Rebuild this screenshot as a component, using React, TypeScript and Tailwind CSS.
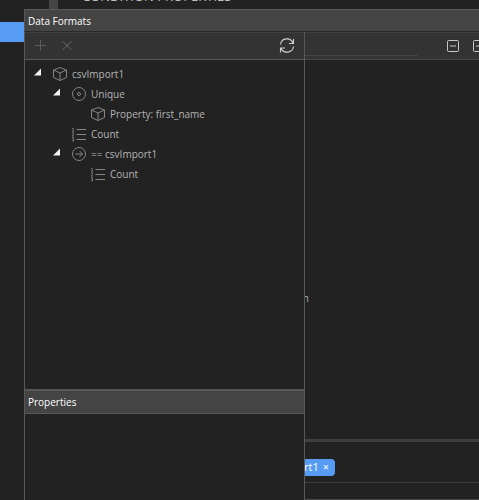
import type { ReactNode } from 'react';

type IconName = 'cube' | 'target' | 'list' | 'arrow';

interface TreeNode {
  label: string;
  icon: IconName;
  children?: TreeNode[];
}

const tree: TreeNode[] = [
  {
    label: 'csvImport1',
    icon: 'cube',
    children: [
      {
        label: 'Unique',
        icon: 'target',
        children: [{ label: 'Property: first_name', icon: 'cube' }],
      },
      { label: 'Count', icon: 'list' },
      {
        label: '== csvImport1',
        icon: 'arrow',
        children: [{ label: 'Count', icon: 'list' }],
      },
    ],
  },
];

const nodeIcons: Record<IconName, ReactNode> = {
  cube: <path d="M8 1.5 14.5 4v7.5L8 14.5 1.5 11.5V4ZM1.5 4 8 7l6.5-3M8 7v7.5" />,
  target: (
    <>
      <circle cx="8" cy="8" r="6.5" />
      <circle cx="8" cy="8" r="1.5" />
    </>
  ),
  list: (
    <>
      <path d="M5.5 3.5H15M5.5 8.5H15M5.5 13.5H15" />
      <path d="M1.2 2.5 2.2 2v3M1 5.5h2M1 7h1.5v1.3L1 10h2M1 11.5h1.5v3.5H1M1.5 13.2h1" strokeWidth="0.8" />
    </>
  ),
  arrow: (
    <>
      <circle cx="8" cy="8" r="6.5" />
      <path d="M4.5 8h7M8.5 5l3 3-3 3" />
    </>
  ),
};

function NodeIcon({ name }: { name: IconName }) {
  return (
    <svg viewBox="0 0 16 16" className="h-4 w-4 shrink-0 text-[#858585]" fill="none" stroke="currentColor" aria-hidden="true">
      {nodeIcons[name]}
    </svg>
  );
}

function TreeItem({ node }: { node: TreeNode }) {
  return (
    <li>
      <div className="flex h-5 items-center">
        {node.children ? (
          <button type="button" aria-label={`Collapse ${node.label}`} className="h-5 w-5 shrink-0 text-[#f2f2f2]">
            <svg viewBox="0 0 20 20" className="h-5 w-5" fill="currentColor">
              <path d="M9 4.5v7H2Z" />
            </svg>
          </button>
        ) : (
          <span className="w-5 shrink-0" />
        )}
        <NodeIcon name={node.icon} />
        <span className="ml-1 whitespace-nowrap">{node.label}</span>
      </div>
      {node.children && (
        <ul className="pl-[19px]">
          {node.children.map((child) => (
            <TreeItem key={child.label} node={child} />
          ))}
        </ul>
      )}
    </li>
  );
}

function CollapseButton({ label }: { label: string }) {
  return (
    <button type="button" aria-label={label} className="h-4 w-4 shrink-0 text-[#c8c8c8]">
      <svg viewBox="0 0 16 16" className="h-4 w-4" fill="none" stroke="currentColor">
        <rect x="2.5" y="2.5" width="11" height="11" rx="1" />
        <path d="M5 8h6" />
      </svg>
    </button>
  );
}

export default function App() {
  return (
    <div className="flex min-h-screen flex-col overflow-hidden bg-[#222222] font-['Open_Sans','Noto_Sans',sans-serif] text-[10px] leading-4 text-[#b4b4b4]">
      <header className="flex h-[9px] items-end overflow-hidden pl-[49px]">
        <div className="h-[9px] w-[9px] bg-[#454545]" />
        <h1 className="mb-[5px] ml-6 whitespace-nowrap text-[13px] leading-4 text-[#c0c0c0]">CONDITION PROPERTIES</h1>
      </header>

      <div className="flex flex-1">
        <div className="w-6 shrink-0 pt-[13px]">
          <div className="h-5 bg-[#569cf5]" />
        </div>

        <div className="flex min-w-0 flex-1 flex-col border-t border-[#585858]">
          <div className="flex h-[22px] items-center border-b border-l border-b-[#2a2a2a] border-l-[#585858] bg-[#444444] pt-px pl-[3px]">
            <h2 className="font-medium text-white">Data Formats</h2>
          </div>

          <div className="flex flex-1">
            <section className="flex w-[281px] shrink-0 flex-col border-x border-[#585858]">
              <div className="flex h-7 items-center border-t border-b border-t-[#414141] border-b-[#585858] bg-[#333333] pr-[9px] pl-2">
                <button type="button" aria-label="Add" className="h-4 w-4 text-[#5c5c5c]">
                  <svg viewBox="0 0 16 16" className="h-4 w-4" fill="none" stroke="currentColor">
                    <path d="M7.5 2v11M2 7.5h11" />
                  </svg>
                </button>
                <button type="button" aria-label="Remove" className="ml-[10px] h-4 w-4 text-[#6a6a6a]">
                  <svg viewBox="0 0 16 16" className="h-4 w-4" fill="none" stroke="currentColor">
                    <path d="m3.5 3 9 9M12.5 3l-9 9" />
                  </svg>
                </button>
                <button type="button" aria-label="Refresh" className="ml-auto h-4 w-4 text-[#d0d0d0]">
                  <svg viewBox="0 0 16 16" className="h-4 w-4" fill="none" stroke="currentColor" strokeWidth="1.1">
                    <path d="M1.5 6.5A6.5 6.5 0 0 1 14 5M14.5 1v4.5H10M14.5 8.5A6.5 6.5 0 0 1 2 10M1.5 14.5V10H6" />
                  </svg>
                </button>
              </div>

              <ul className="flex-1 pt-1 pl-[7px]">
                {tree.map((node) => (
                  <TreeItem key={node.label} node={node} />
                ))}
              </ul>

              <div className="flex h-[25px] items-center border-t-2 border-b border-[#585858] bg-[#444444] pl-[3px]">
                <h2 className="font-medium text-white">Properties</h2>
              </div>
              <div className="h-[86px]" />
            </section>

            <section className="flex min-w-0 flex-1 flex-col">
              <div className="flex h-7 items-center overflow-hidden border-t border-b border-t-[#414141] border-b-[#484848] bg-[#333333]">
                <input type="text" aria-label="Filter" className="h-5 w-[113px] shrink-0 border-b border-[#444444] bg-transparent outline-none" />
                <div className="ml-auto flex w-[34px] shrink-0 gap-[10px]">
                  <CollapseButton label="Collapse item" />
                  <CollapseButton label="Collapse all" />
                </div>
              </div>
              <div className="flex-1 pt-[230px]">
                <p className="flex w-1 justify-end overflow-hidden">Condition</p>
              </div>
              <div className="flex h-[61px] flex-col border-y border-t-[3px] border-t-[#3f3f3f] border-b-[#484848]">
                <div className="flex h-[41px] items-center border-b border-[#3c3c3c] pt-[10px]">
                  <div className="flex h-[17px] w-[30px] items-center justify-end overflow-hidden rounded-r-sm bg-[#569cf5] pr-[6px] text-[11px] font-medium text-white">
                    <span>csvImport1</span>
                    <button type="button" aria-label="Remove csvImport1" className="ml-1 w-2">
                      ×
                    </button>
                  </div>
                </div>
              </div>
            </section>
          </div>
        </div>
      </div>
    </div>
  );
}
